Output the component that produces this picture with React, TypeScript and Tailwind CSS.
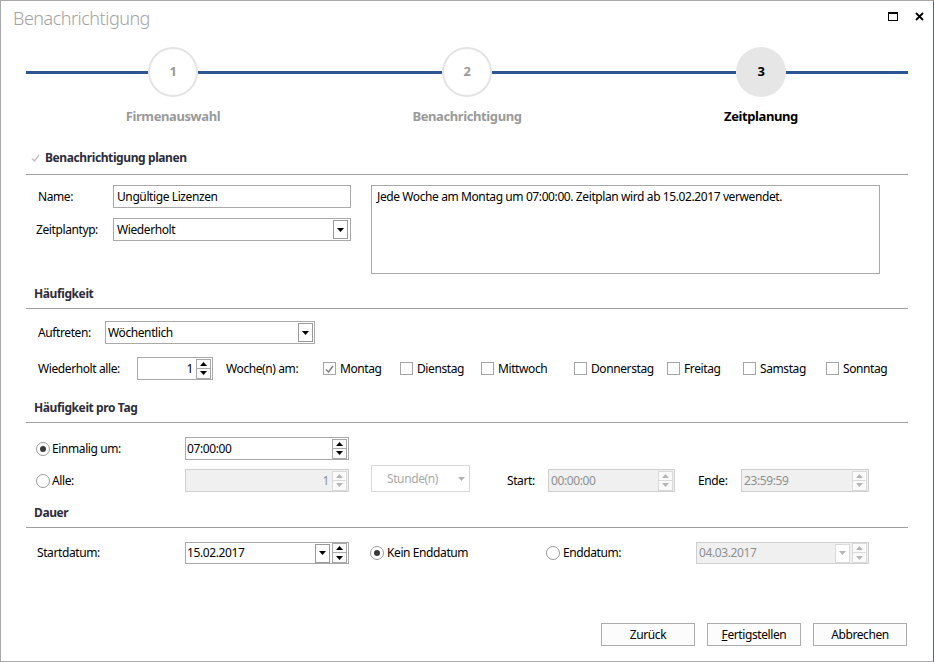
import React from "react";

const FONT = "font-['Noto_Sans',sans-serif]";

function Tri({ up, color }: { up?: boolean; color: string }) {
  return (
    <svg width="7" height="4" viewBox="0 0 7 4">
      {up ? <path d="M0 4h7L3.5 0z" fill={color} /> : <path d="M0 0h7L3.5 4z" fill={color} />}
    </svg>
  );
}

function DropBtn({ disabled }: { disabled?: boolean }) {
  return (
    <div
      className={`w-[15px] h-[19px] border flex items-center justify-center bg-white ${
        disabled ? "border-[#dadada]" : "border-[#9a9a9a]"
      }`}
    >
      <Tri color={disabled ? "#b5b5b5" : "#000"} />
    </div>
  );
}

function Spin({ disabled }: { disabled?: boolean }) {
  const b = disabled ? "border-[#dadada]" : "border-[#a8a8a8]";
  const c = disabled ? "#b5b5b5" : "#000";
  return (
    <div className="flex flex-col w-[15px] h-[20px]">
      <div className={`h-[10px] border ${b} flex items-center justify-center bg-[#fafafa]`}>
        <Tri up color={c} />
      </div>
      <div className={`h-[10px] border-x border-b ${b} flex items-center justify-center bg-[#fafafa]`}>
        <Tri color={c} />
      </div>
    </div>
  );
}

function Check({ checked, faint }: { checked?: boolean; faint?: boolean }) {
  return (
    <div
      className={`w-[13px] h-[13px] border ${faint ? "border-transparent" : "border-[#a6a6a6]"} bg-white flex items-center justify-center`}
    >
      {checked && (
        <svg width="9" height="8" viewBox="0 0 9 8">
          <path d="M1 4.5L3.5 7L8 1" stroke={faint ? "#c2c2c2" : "#7a7a7a"} strokeWidth="1.4" fill="none" />
        </svg>
      )}
    </div>
  );
}

function Radio({ on }: { on?: boolean }) {
  return (
    <div className="w-[14px] h-[14px] rounded-full border border-[#9c9c9c] bg-white flex items-center justify-center">
      {on && <div className="w-[6px] h-[6px] rounded-full bg-[#3a3a3a]" />}
    </div>
  );
}

function SectionHeader({ title, mt, checkbox }: { title: string; mt: string; checkbox?: boolean }) {
  return (
    <div>
      <div className={`${mt} h-[20px] flex items-center ${checkbox ? "pl-[3px]" : "pl-[8px]"}`}>
        {checkbox && (
          <div className="mr-[3px]">
            <Check checked faint />
          </div>
        )}
        <span className="font-bold text-[12px] text-[#2c2c3c]">{title}</span>
      </div>
      <div className={`${checkbox ? "mt-[6px]" : "mt-[4px]"} h-px bg-[#a0a0a0]`} />
    </div>
  );
}

function Step({ n, label, active }: { n: string; label: string; active?: boolean }) {
  return (
    <div className="flex flex-col items-stretch">
      <div className="flex items-center pt-[7px]">
        <div className="flex-1 h-[3px] bg-[#2d5592]" />
        <div
          className={`w-[50px] h-[50px] rounded-full flex items-center justify-center text-[13px] font-bold ${
            active ? "bg-[#e6e6e6] text-black" : "bg-white border-2 border-[#e4e4e4] text-[#9a9a9a]"
          }`}
        >
          {n}
        </div>
        <div className="flex-1 h-[3px] bg-[#2d5592]" />
      </div>
      <div
        className={`mt-[11px] leading-[16px] text-center text-[13px] font-bold ${
          active ? "text-black" : "text-[#9a9a9a]"
        }`}
      >
        {label}
      </div>
    </div>
  );
}

const inputBorder = "border border-[#a9a9a9]";
const disBox = "border border-[#cfcfcf] bg-[#f0f0f0] text-[#8f8f8f]";

const days: [string, number, boolean][] = [
  ["Montag", 77, true],
  ["Dienstag", 81, false],
  ["Mittwoch", 93, false],
  ["Donnerstag", 93, false],
  ["Freitag", 76, false],
  ["Samstag", 83, false],
  ["Sonntag", 70, false],
];

export default function App() {
  return (
    <div
      className={`${FONT} tracking-[-0.4px] w-[934px] h-[662px] bg-white border-l border-t border-b border-[#a8a8a8] border-r border-r-[#43669c] flex flex-col text-[12px] text-black overflow-hidden`}
    >
      {/* Title bar */}
      <div className="h-[39px] flex items-start">
        <div className="pl-[12px] pt-[4px] text-[18px] font-light text-[#a3a3a3] tracking-[-0.5px]">Benachrichtigung</div>
        <div className="ml-auto flex items-center gap-[17px] pt-[11px] pr-[9px]">
          <div className="w-[10px] h-[9px] border border-black border-t-2" />
          <svg width="9" height="9" viewBox="0 0 9 9">
            <path d="M1 1L8 8M8 1L1 8" stroke="#000" strokeWidth="1.8" />
          </svg>
        </div>
      </div>

      <div className="px-[25px] flex flex-col flex-1">
        {/* Stepper */}
        <div className="h-[88px] grid grid-cols-3">
          <Step n="1" label="Firmenauswahl" />
          <Step n="2" label="Benachrichtigung" />
          <Step n="3" label="Zeitplanung" active />
        </div>

        <SectionHeader title="Benachrichtigung planen" mt="mt-[20px]" checkbox />

        {/* Name block */}
        <div className="mt-[10px] flex">
          <div className="flex flex-col gap-[10px] pl-[12px]">
            <div className="flex items-center h-[23px]">
              <div className="w-[75px]">Name:</div>
              <div className={`w-[238px] h-[23px] ${inputBorder} flex items-center pl-[3px]`}>Ungültige Lizenzen</div>
            </div>
            <div className="flex items-center h-[23px]">
              <div className="w-[75px] -ml-[2px]">Zeitplantyp:</div>
              <div className={`ml-[2px] w-[238px] h-[23px] ${inputBorder} flex items-center pl-[3px] pr-[2px]`}>
                <span className="flex-1">Wiederholt</span>
                <DropBtn />
              </div>
            </div>
          </div>
          <div className="ml-[20px] w-[509px] h-[89px] border border-[#a9a9a9] pl-[5px] pt-[2px] leading-[18px]">
            Jede Woche am Montag um 07:00:00. Zeitplan wird ab 15.02.2017 verwendet.
          </div>
        </div>

        <SectionHeader title="Häufigkeit" mt="mt-[10px]" />

        <div className="mt-[12px] h-[23px] flex items-center pl-[12px]">
          <div className="w-[67px]">Auftreten:</div>
          <div className={`w-[210px] h-[23px] ${inputBorder} flex items-center pl-[2px] pr-[1px]`}>
            <span className="flex-1">Wöchentlich</span>
            <DropBtn />
          </div>
        </div>

        <div className="mt-[13px] h-[23px] flex items-center pl-[12px]">
          <div className="w-[99px]">Wiederholt alle:</div>
          <div className={`w-[76px] h-[23px] ${inputBorder} flex items-center pr-[1px]`}>
            <span className="flex-1 text-right pr-[3px]">1</span>
            <Spin />
          </div>
          <div className="ml-[13px] w-[97px]">Woche(n) am:</div>
          {days.map(([d, w, c]) => (
            <div key={d} className="flex items-center" style={{ width: w }}>
              <Check checked={c} />
              <span className="ml-[4px]">{d}</span>
            </div>
          ))}
        </div>

        <SectionHeader title="Häufigkeit pro Tag" mt="mt-[18px]" />

        <div className="mt-[14px] h-[23px] flex items-center pl-[10px]">
          <div className="w-[149px] flex items-center">
            <Radio on />
            <span className="ml-[2px]">Einmalig um:</span>
          </div>
          <div className={`w-[164px] h-[23px] ${inputBorder} flex items-center pl-[1px] pr-[1px]`}>
            <span className="flex-1">07:00:00</span>
            <Spin />
          </div>
        </div>

        <div className="mt-[5px] h-[27px] flex items-end pl-[10px]">
          <div className="w-[149px] h-[23px] flex items-center">
            <Radio />
            <span className="ml-[2px]">Alle:</span>
          </div>
          <div className={`w-[164px] h-[23px] ${disBox} flex items-center pr-[1px]`}>
            <span className="flex-1 text-right pr-[3px]">1</span>
            <Spin disabled />
          </div>
          <div className="ml-[22px] self-stretch w-[99px] border border-[#d9d9d9] bg-white text-[#a8a8a8] flex items-center pl-[15px] pr-[4px]">
            <span className="flex-1">Stunde(n)</span>
            <Tri color="#b5b5b5" />
          </div>
          <div className="ml-[37px] w-[41px] h-[23px] flex items-center">Start:</div>
          <div className={`w-[127px] h-[23px] ${disBox} flex items-center pl-[2px] pr-[1px]`}>
            <span className="flex-1">00:00:00</span>
            <Spin disabled />
          </div>
          <div className="ml-[23px] w-[43px] h-[23px] flex items-center">Ende:</div>
          <div className={`w-[128px] h-[23px] ${disBox} flex items-center pl-[2px] pr-[1px]`}>
            <span className="flex-1">23:59:59</span>
            <Spin disabled />
          </div>
        </div>

        <SectionHeader title="Dauer" mt="mt-[11px]" />

        <div className="mt-[14px] h-[22px] flex items-center pl-[11px]">
          <div className="w-[148px]">Startdatum:</div>
          <div className={`w-[164px] h-[22px] ${inputBorder} flex items-center pl-[1px] pr-[1px] gap-[2px]`}>
            <span className="flex-1">15.02.2017</span>
            <DropBtn />
            <Spin />
          </div>
          <div className="ml-[21px] w-[176px] flex items-center">
            <Radio on />
            <span className="ml-[3px]">Kein Enddatum</span>
          </div>
          <div className="w-[150px] flex items-center">
            <Radio />
            <span className="ml-[3px]">Enddatum:</span>
          </div>
          <div className={`w-[173px] h-[22px] ${disBox} flex items-center pl-[2px] pr-[1px] gap-[2px]`}>
            <span className="flex-1">04.03.2017</span>
            <DropBtn disabled />
            <Spin disabled />
          </div>
        </div>

        <div className="mt-auto mb-[15px] flex justify-end gap-[12px] pr-[1px]">
          <button className="w-[94px] h-[23px] border border-[#acacac] bg-[#fcfcfc] text-[12px]">Zurück</button>
          <button className="w-[94px] h-[23px] border border-[#acacac] bg-[#fcfcfc] text-[12px]">
            <span className="underline">F</span>ertigstellen
          </button>
          <button className="w-[94px] h-[23px] border border-[#acacac] bg-[#fcfcfc] text-[12px]">Abbrechen</button>
        </div>
      </div>
    </div>
  );
}
